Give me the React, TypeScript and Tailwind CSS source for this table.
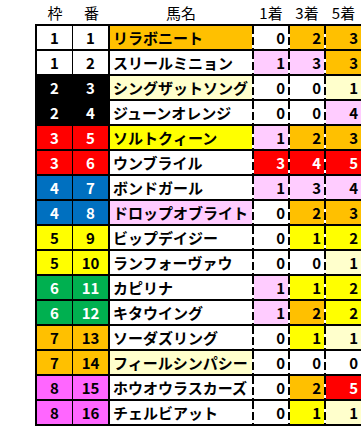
import React from "react";

const W = "bg-white";
const OR = "bg-[#ffc000]";
const LY = "bg-[#ffffcc]";
const YE = "bg-[#ffff00]";
const PK = "bg-[#ffccff]";
const RD = "bg-[#ff0000] text-white";

type Row = {
  f: number;
  n: number;
  name: string;
  nameBg: string;
  r: [number, string][];
};

const frameStyle: Record<number, string> = {
  1: "bg-white text-black",
  2: "bg-black text-white",
  3: "bg-[#ff0000] text-white",
  4: "bg-[#0070c0] text-white",
  5: "bg-[#ffff00] text-black",
  6: "bg-[#00b050] text-white",
  7: "bg-[#ffc000] text-black",
  8: "bg-[#ff66ff] text-black",
};

const rows: Row[] = [
  { f: 1, n: 1, name: "リラボニート", nameBg: OR, r: [[0, W], [2, OR], [3, OR]] },
  { f: 1, n: 2, name: "スリールミニョン", nameBg: W, r: [[1, PK], [3, PK], [3, OR]] },
  { f: 2, n: 3, name: "シングザットソング", nameBg: LY, r: [[0, W], [0, W], [1, LY]] },
  { f: 2, n: 4, name: "ジューンオレンジ", nameBg: W, r: [[0, W], [0, W], [4, PK]] },
  { f: 3, n: 5, name: "ソルトクィーン", nameBg: YE, r: [[1, PK], [2, OR], [3, OR]] },
  { f: 3, n: 6, name: "ウンブライル", nameBg: W, r: [[3, RD], [4, RD], [5, RD]] },
  { f: 4, n: 7, name: "ボンドガール", nameBg: W, r: [[1, PK], [3, PK], [4, PK]] },
  { f: 4, n: 8, name: "ドロップオブライト", nameBg: PK, r: [[0, W], [2, OR], [3, OR]] },
  { f: 5, n: 9, name: "ビップデイジー", nameBg: W, r: [[0, W], [1, YE], [2, YE]] },
  { f: 5, n: 10, name: "ランフォーヴァウ", nameBg: W, r: [[0, W], [0, W], [1, LY]] },
  { f: 6, n: 11, name: "カピリナ", nameBg: W, r: [[1, PK], [1, YE], [2, YE]] },
  { f: 6, n: 12, name: "キタウイング", nameBg: W, r: [[1, PK], [2, OR], [2, YE]] },
  { f: 7, n: 13, name: "ソーダズリング", nameBg: W, r: [[0, W], [1, YE], [1, LY]] },
  { f: 7, n: 14, name: "フィールシンパシー", nameBg: LY, r: [[0, W], [0, W], [0, W]] },
  { f: 8, n: 15, name: "ホウオウラスカーズ", nameBg: W, r: [[0, W], [2, OR], [5, RD]] },
  { f: 8, n: 16, name: "チェルビアット", nameBg: W, r: [[0, W], [1, YE], [1, LY]] },
];

const Dash = () => (
  <div
    className="w-[2px] h-full shrink-0"
    style={{
      backgroundImage:
        "repeating-linear-gradient(to bottom, #000 0px, #000 8px, transparent 8px, transparent 11px)",
    }}
  />
);

export default function App() {
  return (
    <div
      className="w-[361px] h-[426px] bg-white overflow-hidden text-black text-[15px] leading-none"
      style={{ fontFamily: '"Noto Sans CJK JP", "Noto Sans", sans-serif' }}
    >
      <div className="flex h-[24px] items-center">
        <div className="w-[37px] shrink-0" />
        <div className="w-[36px] shrink-0 text-center">枠</div>
        <div className="w-[37px] shrink-0 text-center">番</div>
        <div className="w-[142px] shrink-0 text-center">馬名</div>
        <div className="w-[2px] shrink-0" />
        <div className="w-[34px] shrink-0 text-center">1着</div>
        <div className="w-[2px] shrink-0" />
        <div className="w-[34px] shrink-0 text-center">3着</div>
        <div className="w-[2px] shrink-0" />
        <div className="w-[35px] shrink-0 text-center">5着</div>
      </div>
      <div className="ml-[35px] w-[330px] border-l-2 border-b-2 border-black">
        {rows.map((row) => (
          <div key={row.n} className="flex h-[25px] border-t-2 border-black font-bold">
            <div
              className={`w-[36px] shrink-0 border-r border-black flex items-center justify-center ${frameStyle[row.f]}`}
            >
              {row.f}
            </div>
            <div
              className={`w-[37px] shrink-0 border-r-2 border-black flex items-center justify-center ${frameStyle[row.f]}`}
            >
              {row.n}
            </div>
            <div className={`w-[142px] shrink-0 flex items-center pl-[3px] ${row.nameBg}`}>
              {row.name}
            </div>
            <Dash />
            <div className={`w-[34px] shrink-0 flex items-center justify-end pr-[3px] ${row.r[0][1]}`}>
              {row.r[0][0]}
            </div>
            <Dash />
            <div className={`w-[34px] shrink-0 flex items-center justify-end pr-[3px] ${row.r[1][1]}`}>
              {row.r[1][0]}
            </div>
            <Dash />
            <div className={`w-[35px] shrink-0 flex items-center justify-end pr-[3px] ${row.r[2][1]}`}>
              {row.r[2][0]}
            </div>
          </div>
        ))}
      </div>
    </div>
  );
}
